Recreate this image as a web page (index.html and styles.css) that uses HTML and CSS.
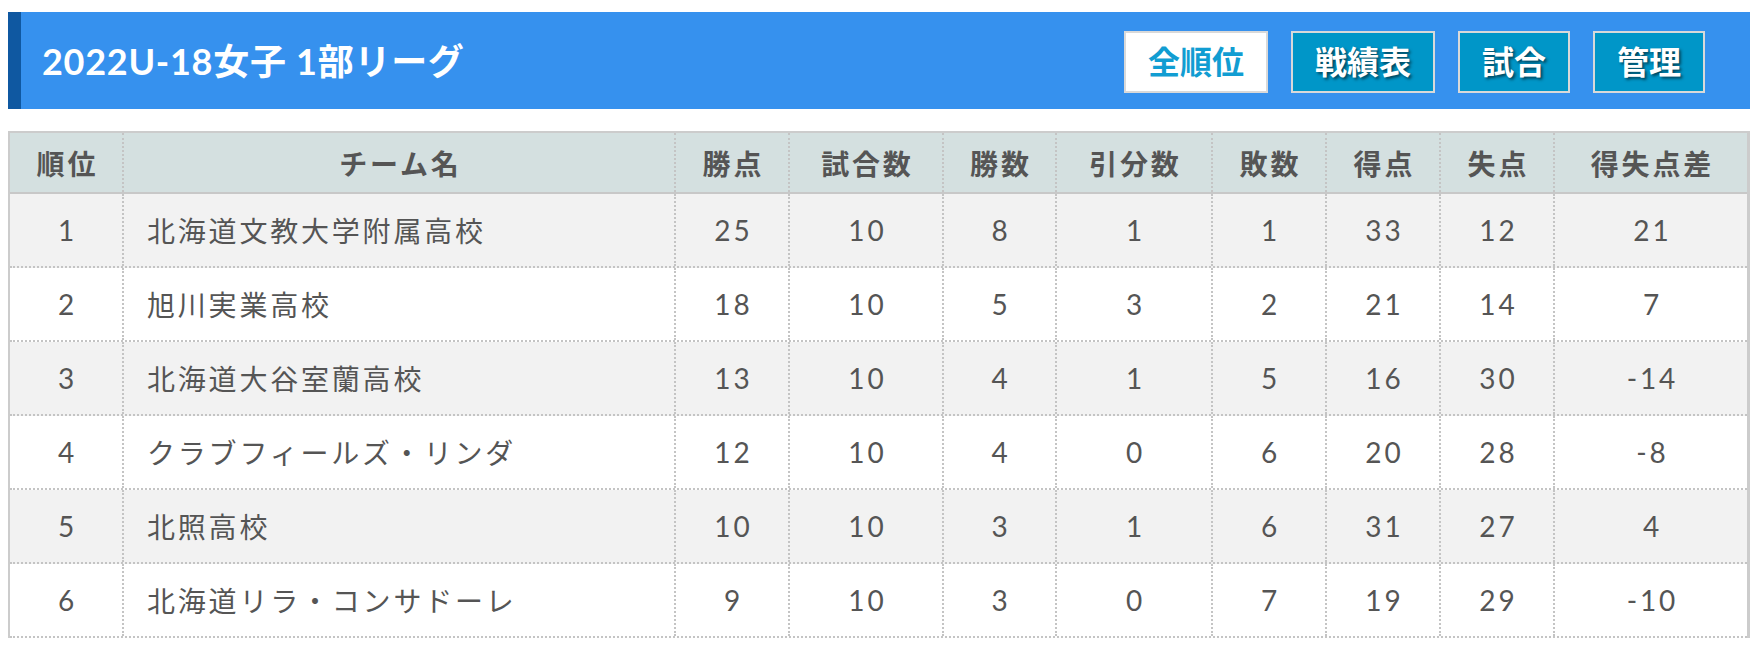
FILE: index.html
```html
<!DOCTYPE html>
<html lang="ja">
<head>
<meta charset="utf-8">
<title>2022U-18女子 1部リーグ</title>
<link rel="stylesheet" href="styles.css">
</head>
<body>
<div class="page">
  <header class="league-head">
    <h1 class="league-title">2022U-18女子 1部リーグ</h1>
    <nav class="tabs">
      <a class="tab tab-active">全順位</a>
      <a class="tab">戦績表</a>
      <a class="tab">試合</a>
      <a class="tab">管理</a>
    </nav>
  </header>

  <div class="standings">
    <div class="row row-head">
      <div class="cell">順位</div>
      <div class="cell">チーム名</div>
      <div class="cell">勝点</div>
      <div class="cell">試合数</div>
      <div class="cell">勝数</div>
      <div class="cell">引分数</div>
      <div class="cell">敗数</div>
      <div class="cell">得点</div>
      <div class="cell">失点</div>
      <div class="cell">得失点差</div>
    </div>
    <div class="row row-odd">
      <div class="cell">1</div>
      <div class="cell cell-team">北海道文教大学附属高校</div>
      <div class="cell">25</div><div class="cell">10</div><div class="cell">8</div><div class="cell">1</div><div class="cell">1</div><div class="cell">33</div><div class="cell">12</div><div class="cell">21</div>
    </div>
    <div class="row">
      <div class="cell">2</div>
      <div class="cell cell-team">旭川実業高校</div>
      <div class="cell">18</div><div class="cell">10</div><div class="cell">5</div><div class="cell">3</div><div class="cell">2</div><div class="cell">21</div><div class="cell">14</div><div class="cell">7</div>
    </div>
    <div class="row row-odd">
      <div class="cell">3</div>
      <div class="cell cell-team">北海道大谷室蘭高校</div>
      <div class="cell">13</div><div class="cell">10</div><div class="cell">4</div><div class="cell">1</div><div class="cell">5</div><div class="cell">16</div><div class="cell">30</div><div class="cell">-14</div>
    </div>
    <div class="row">
      <div class="cell">4</div>
      <div class="cell cell-team">クラブフィールズ・リンダ</div>
      <div class="cell">12</div><div class="cell">10</div><div class="cell">4</div><div class="cell">0</div><div class="cell">6</div><div class="cell">20</div><div class="cell">28</div><div class="cell">-8</div>
    </div>
    <div class="row row-odd">
      <div class="cell">5</div>
      <div class="cell cell-team">北照高校</div>
      <div class="cell">10</div><div class="cell">10</div><div class="cell">3</div><div class="cell">1</div><div class="cell">6</div><div class="cell">31</div><div class="cell">27</div><div class="cell">4</div>
    </div>
    <div class="row">
      <div class="cell">6</div>
      <div class="cell cell-team">北海道リラ・コンサドーレ</div>
      <div class="cell">9</div><div class="cell">10</div><div class="cell">3</div><div class="cell">0</div><div class="cell">7</div><div class="cell">19</div><div class="cell">29</div><div class="cell">-10</div>
    </div>
  </div>
</div>
</body>
</html>
```

FILE: styles.css
```css
* {
  box-sizing: border-box;
}

html, body {
  margin: 0;
  padding: 0;
  background: #ffffff;
}

body {
  font-family: Lato, "Noto Sans CJK JP", sans-serif;
  color: #555555;
}

.page {
  padding: 12px 12px 0 8px;
}

.league-head {
  height: 97px;
  background: #3691ee;
  border-left: 13px solid #0f58a1;
  display: flex;
  align-items: center;
  justify-content: space-between;
  padding: 0 45px 0 21px;
}

.league-title {
  margin: 0;
  font-size: 36px;
  font-weight: 700;
  color: #ffffff;
  letter-spacing: 0.02em;
  line-height: 1;
}

.tabs {
  display: flex;
  gap: 23px;
  padding-top: 2px;
}

.tab {
  display: block;
  height: 62px;
  line-height: 58px;
  padding: 0 22px;
  border: 2px solid #d9d9d9;
  background: #0096c8;
  color: #ffffff;
  font-size: 32px;
  font-weight: 700;
  text-shadow: 2px 2px 3px rgba(0, 0, 0, 0.55);
  cursor: pointer;
}

.tab-active {
  background: #ffffff;
  color: #119dd2;
  text-shadow: none;
}

.standings {
  margin-top: 22px;
  border-top: 2px solid #cccccc;
  border-left: 2px solid #cccccc;
  border-right: 3px solid #cccccc;
}

.row {
  display: grid;
  grid-template-columns: 112px 552px 114px 154px 113px 156px 114px 114px 114px 194px;
  height: 74px;
  border-bottom: 2px dotted #c4c4c4;
  background: #ffffff;
}

.row-odd {
  background: #f2f2f2;
}

.row-head {
  height: 61px;
  background: #d4e0e0;
  border-bottom: 2px solid #c8c8c8;
}

.cell {
  display: flex;
  align-items: center;
  justify-content: center;
  font-size: 28px;
  letter-spacing: 0.1em;
  padding-left: 0.1em;
  white-space: nowrap;
}

.cell + .cell {
  border-left: 2px dotted #c4c4c4;
}

.row-head .cell {
  font-weight: 700;
  color: #555555;
}

.cell-team {
  justify-content: flex-start;
  padding-left: 23px;
}
```
